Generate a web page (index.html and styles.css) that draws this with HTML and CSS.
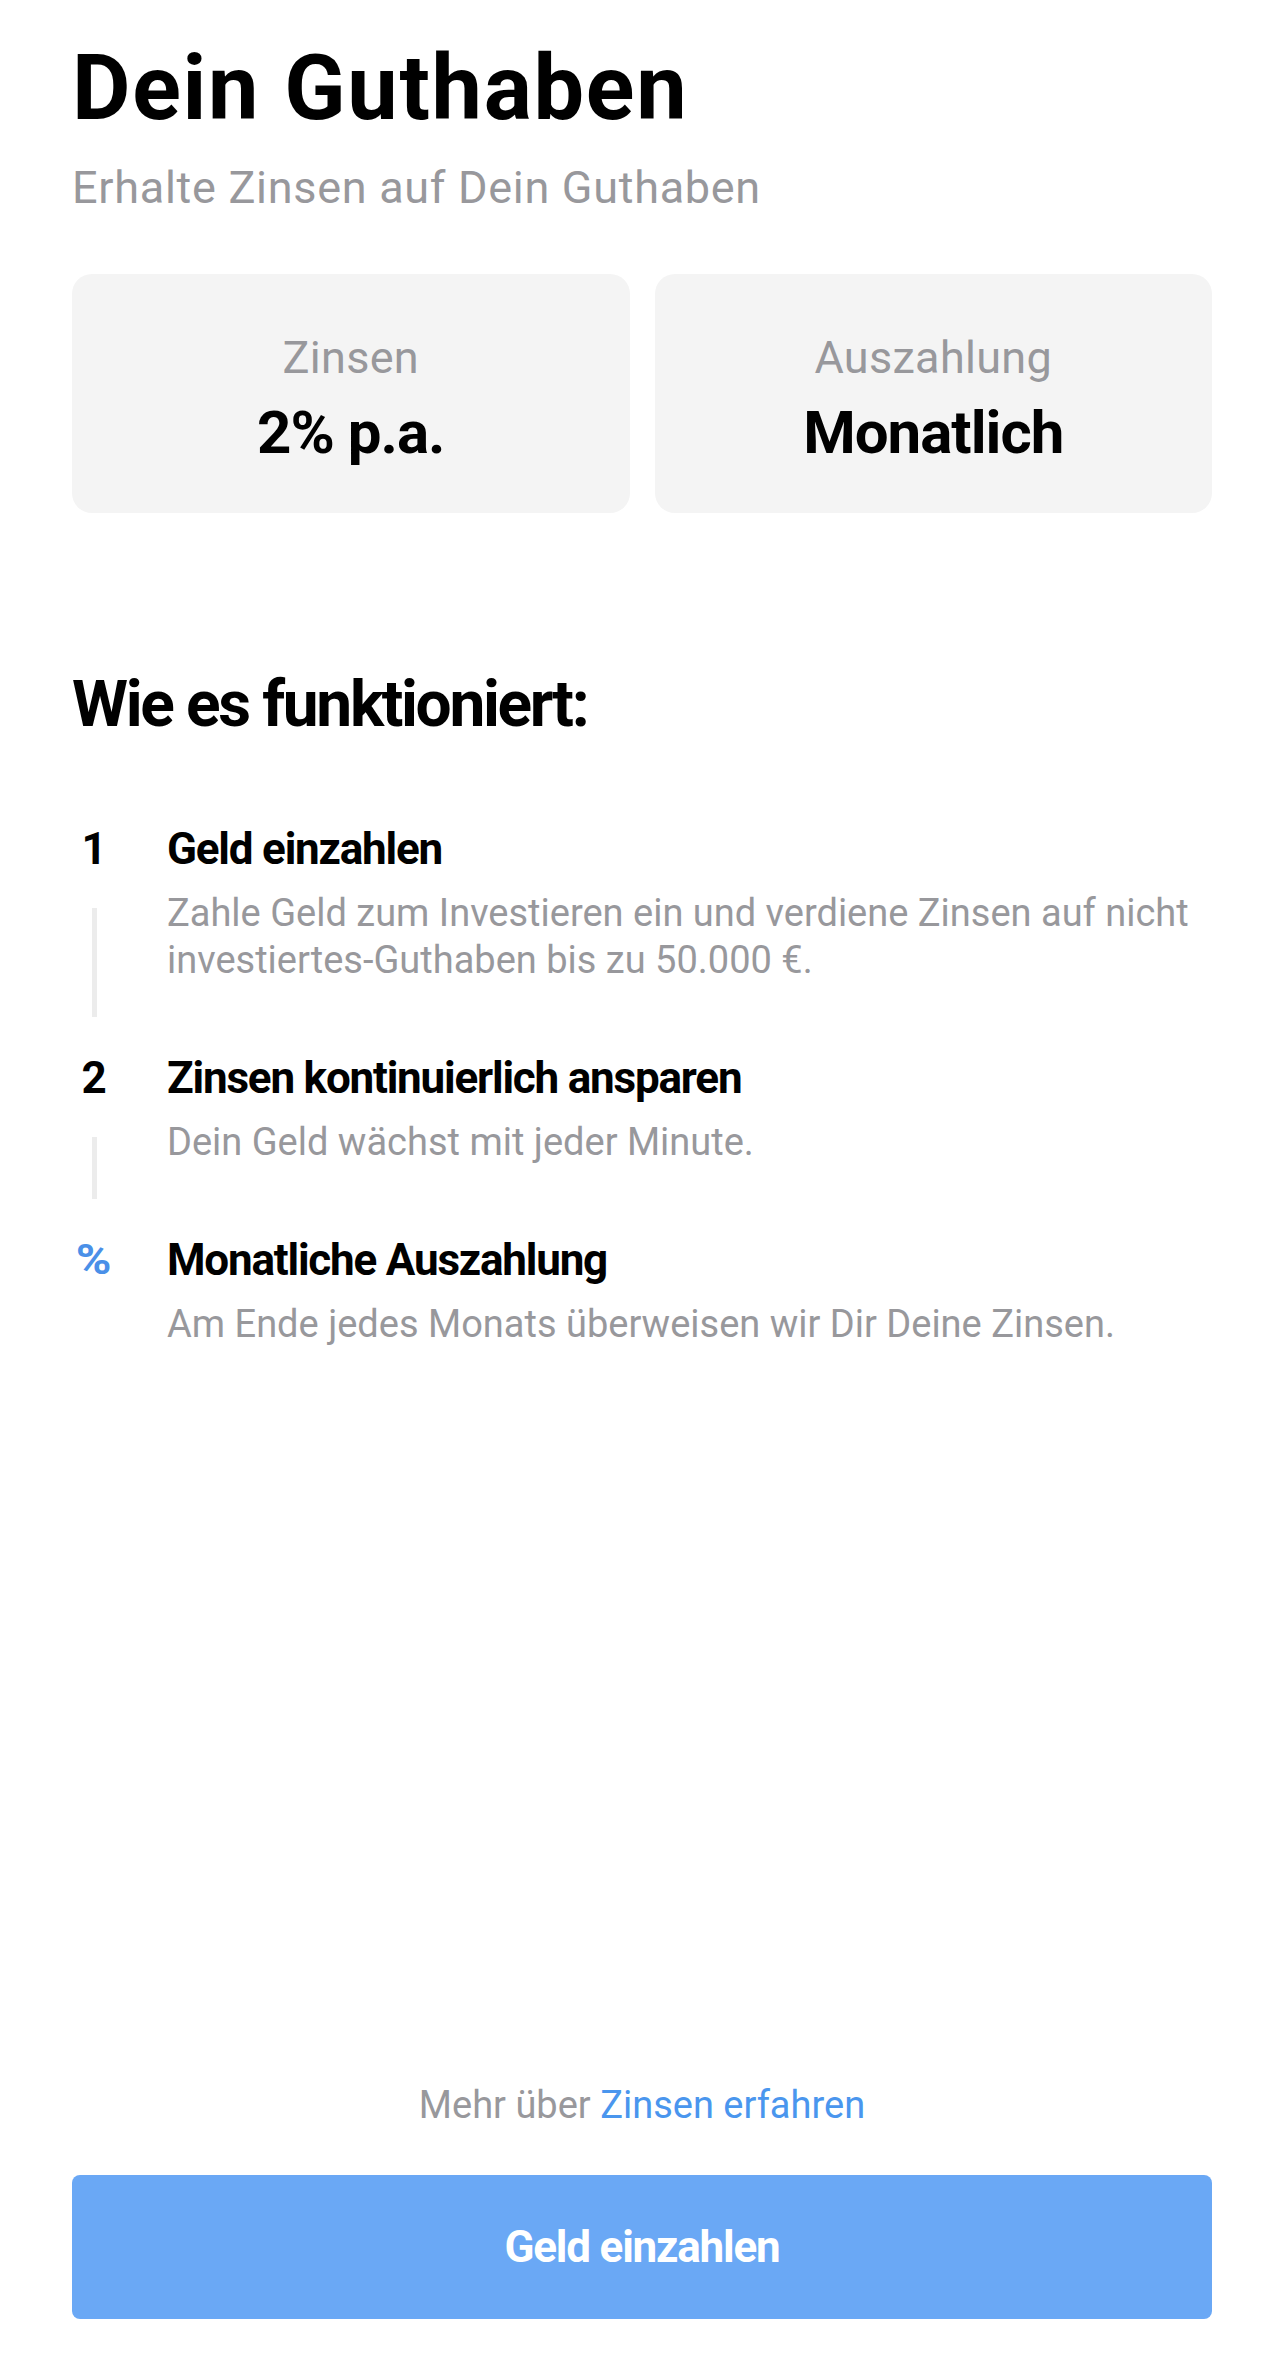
FILE: index.html
```html
<!DOCTYPE html>
<html lang="de">
<head>
<meta charset="utf-8">
<title>Dein Guthaben</title>
<link rel="stylesheet" href="styles.css">
</head>
<body>
<div class="page">
  <main class="content">
    <h1 class="title">Dein Guthaben</h1>
    <p class="subtitle">Erhalte Zinsen auf Dein Guthaben</p>
    <div class="cards">
      <div class="card">
        <div class="card-label">Zinsen</div>
        <div class="card-value">2% p.a.</div>
      </div>
      <div class="card">
        <div class="card-label">Auszahlung</div>
        <div class="card-value">Monatlich</div>
      </div>
    </div>
    <h2 class="section-title">Wie es funktioniert:</h2>
    <ol class="steps">
      <li class="step">
        <div class="step-marker">
          <span class="step-num">1</span>
          <span class="step-line"></span>
        </div>
        <div class="step-body">
          <div class="step-title">Geld einzahlen</div>
          <p class="step-desc">Zahle Geld zum Investieren ein und verdiene Zinsen auf nicht investiertes-Guthaben bis zu 50.000&nbsp;€.</p>
        </div>
      </li>
      <li class="step">
        <div class="step-marker">
          <span class="step-num">2</span>
          <span class="step-line"></span>
        </div>
        <div class="step-body">
          <div class="step-title">Zinsen kontinuierlich ansparen</div>
          <p class="step-desc">Dein Geld wächst mit jeder Minute.</p>
        </div>
      </li>
      <li class="step step-last">
        <div class="step-marker">
          <span class="step-num step-num-icon">%</span>
        </div>
        <div class="step-body">
          <div class="step-title">Monatliche Auszahlung</div>
          <p class="step-desc">Am Ende jedes Monats überweisen wir Dir Deine Zinsen.</p>
        </div>
      </li>
    </ol>
  </main>
  <footer class="footer">
    <p class="more">Mehr über <a class="more-link" href="#">Zinsen erfahren</a></p>
    <button class="cta" type="button">Geld einzahlen</button>
  </footer>
</div>
</body>
</html>
```

FILE: styles.css
```css
* { box-sizing: border-box; }

html, body {
  margin: 0;
  padding: 0;
  background: #ffffff;
}

body {
  font-family: Roboto, "Liberation Sans", sans-serif;
  color: #000000;
}

.page {
  min-height: 100vh;
  display: flex;
  flex-direction: column;
  padding: 35px 71px 37px 72px;
}

.content {
  flex: 1;
}

.title {
  margin: 0;
  font-size: 90px;
  line-height: 108px;
  font-weight: 700;
  letter-spacing: 1.7px;
}

.subtitle {
  margin: 18px 0 0;
  font-size: 45px;
  line-height: 54px;
  color: #98989c;
  letter-spacing: 0.7px;
}

.cards {
  margin-top: 59px;
  display: grid;
  grid-template-columns: 1fr 1fr;
  gap: 25px;
}

.card {
  height: 239px;
  background: #f4f4f4;
  border-radius: 20px;
  padding-top: 57px;
  display: flex;
  flex-direction: column;
  align-items: center;
}

.card-label {
  font-size: 45px;
  line-height: 54px;
  color: #98989c;
  letter-spacing: 0.3px;
}

.card-value {
  margin-top: 10px;
  font-size: 60px;
  line-height: 76px;
  font-weight: 700;
  letter-spacing: -1px;
}

.section-title {
  margin: 152px 0 0;
  font-size: 64px;
  line-height: 80px;
  font-weight: 700;
  letter-spacing: -2.35px;
}

.steps {
  list-style: none;
  margin: 76px 0 0;
  padding: 0;
  display: flex;
  flex-direction: column;
  gap: 33px;
}

.step {
  display: grid;
  grid-template-columns: 44px 1fr;
  column-gap: 51px;
  padding-bottom: 33px;
}

.step-last {
  padding-bottom: 0;
}

.step-marker {
  display: flex;
  flex-direction: column;
  align-items: center;
}

.step-num {
  font-size: 44px;
  line-height: 56px;
  font-weight: 700;
}

.step-num-icon {
  display: inline-block;
  color: #4a90e8;
  font-size: 42px;
  transform: scaleX(1.15);
}

.step-line {
  flex: 1;
  width: 5px;
  margin-top: 31px;
  margin-bottom: -33px;
  background: #ececec;
}

.step-title {
  font-size: 44px;
  line-height: 56px;
  font-weight: 700;
  letter-spacing: -1.2px;
}

.step-desc {
  margin: 13px 0 0;
  font-size: 38px;
  line-height: 47px;
  color: #98989c;
  letter-spacing: 0;
}

.footer {
  display: flex;
  flex-direction: column;
  align-items: stretch;
}

.more {
  margin: 0;
  text-align: center;
  font-size: 38px;
  line-height: 54px;
  color: #98989c;
}

.more-link {
  color: #4a96ee;
  text-decoration: none;
}

.cta {
  margin-top: 43px;
  height: 144px;
  border: 0;
  border-radius: 8px;
  background: #6aa8f5;
  color: #ffffff;
  font-family: inherit;
  font-size: 44px;
  line-height: 56px;
  font-weight: 700;
  letter-spacing: -1.2px;
  padding: 0;
}
```
